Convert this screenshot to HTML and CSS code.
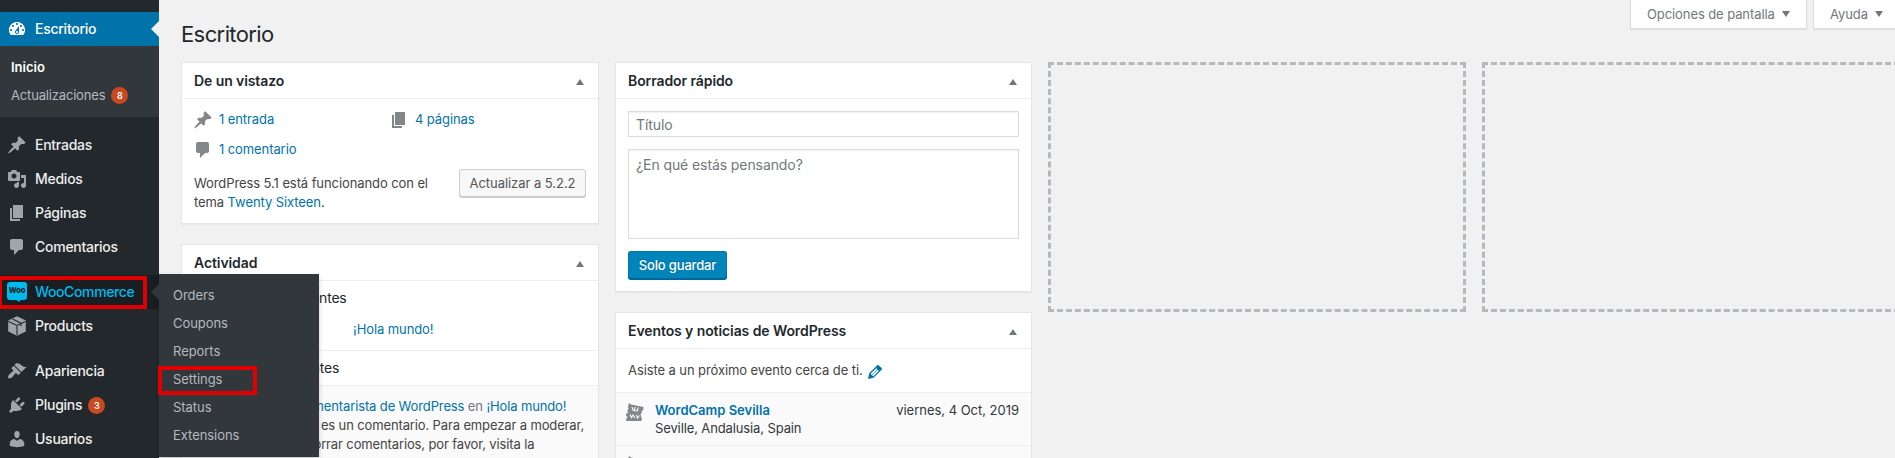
FILE: index.html
```
<!DOCTYPE html>
<html lang="es">
<head>
<meta charset="utf-8">
<title>Escritorio</title>
<link rel="stylesheet" href="styles.css">
</head>
<body>
<svg class="sprite" aria-hidden="true">
  <symbol id="i-dash" viewBox="0 0 20 20"><path fill-rule="evenodd" d="M3.76 16h12.48A7.998 7.998 0 0 0 10 3a7.998 7.998 0 0 0-6.24 13zM10 4c.55 0 1 .45 1 1s-.45 1-1 1-1-.45-1-1 .45-1 1-1zM6 6c.55 0 1 .45 1 1s-.45 1-1 1-1-.45-1-1 .45-1 1-1zm8 0c.55 0 1 .45 1 1s-.45 1-1 1-1-.45-1-1 .45-1 1-1zm-5.37 5.55L12 7v6c0 1.1-.9 2-2 2s-2-.9-2-2c0-.57.24-1.080.63-1.450zM4 10c.55 0 1 .45 1 1s-.45 1-1 1-1-.45-1-1 .45-1 1-1zm12 0c.55 0 1 .45 1 1s-.45 1-1 1-1-.45-1-1 .45-1 1-1zm-5 3c0-.55-.45-1-1-1s-1 .45-1 1 .45 1 1 1 1-.45 1-1z"/></symbol>
  <symbol id="i-pin" viewBox="0 0 20 20"><path d="M10.44 3.02l1.82-1.82 6.36 6.35-1.83 1.82c-1.050-.68-2.480-.57-3.410.36l-.75.75c-.920.93-1.040 2.350-.35 3.410l-1.830 1.820-2.410-2.410-2.800 2.790c-.42.42-3.380 2.710-3.800 2.290s1.860-3.390 2.280-3.810l2.790-2.790L4.100 9.360l1.830-1.820c1.050.69 2.480.57 3.400-.36l.75-.75c.93-.92 1.050-2.350.36-3.410z"/></symbol>
  <symbol id="i-media" viewBox="0 0 20 20"><path fill-rule="evenodd" d="M13 11V4c0-.55-.45-1-1-1h-1.670L9 1H5L3.670 3H2c-.55 0-1 .45-1 1v7c0 .55.45 1 1 1h10c.55 0 1-.45 1-1zM7 4.500c1.380 0 2.500 1.120 2.500 2.500S8.380 9.500 7 9.500 4.500 8.380 4.500 7 5.620 4.500 7 4.500zM14 6h5v10.500c0 1.380-1.120 2.500-2.500 2.500S14 17.880 14 16.500s1.120-2.500 2.500-2.500c.17 0 .34.020.5.050V9h-3V6zm-4 8.050V13h2v3.500c0 1.380-1.120 2.500-2.500 2.500S7 17.880 7 16.500 8.120 14 9.500 14c.17 0 .34.020.5.050z"/></symbol>
  <symbol id="i-page" viewBox="0 0 20 20"><path d="M6 15V2h10v13H6zm-1 1h8v2H3V5h2v11z"/></symbol>
  <symbol id="i-comment" viewBox="0 0 20 20"><path d="M5 2h9c1.100 0 2 .9 2 2v7c0 1.100-.9 2-2 2h-2l-5 5v-5H5c-1.100 0-2-.9-2-2V4c0-1.100.9-2 2-2z"/></symbol>
  <symbol id="i-box" viewBox="0 0 20 20"><path d="M10 .3l8.800 4.300v10.800L10 19.700l-8.800-4.300V4.600z"/><path class="cut" d="M1.500 5.400l8.500 4.100 8.500-4.100M10 9.500V19M5.500 3l8.500 4.200v3"/></symbol>
  <symbol id="i-brush" viewBox="0 0 20 20"><path d="M14.480 11.060L7.410 3.990l1.500-1.500c.5-.56 2.300-.47 3.510.32 1.210.8 1.430 1.280 2.910 2.100 1.180.64 2.450 1.260 4.450.85zm-.71.710L6.700 4.700 4.930 6.470c-.39.39-.39 1.020 0 1.410l1.060 1.060c.39.39.39 1.030 0 1.420-.6.6-1.430 1.110-2.210 1.690-.35.26-.7.53-1.010.84C1.430 14.230.4 16.080 1.400 17.070c.99 1 2.840-.030 4.180-1.360.31-.31.58-.66.850-1.020.57-.78 1.080-1.610 1.690-2.210.39-.39 1.020-.39 1.410 0l1.060 1.060c.39.39 1.020.39 1.410 0z"/></symbol>
  <symbol id="i-plug" viewBox="0 0 20 20"><path d="M13.110 4.360L9.870 7.600 8 5.730l3.240-3.240c.35-.34 1.050-.2 1.560.32.52.51.66 1.210.31 1.550zm-8 1.770l.91-1.120 9.010 9.010-1.190.84c-.71.71-2.630 1.160-3.820 1.160H6.140L4.900 17.260c-.59.59-1.540.59-2.120 0-.59-.58-.59-1.530 0-2.120L4 13.900v-3.880c0-1.130.4-3.190 1.110-3.890zm7.260 3.970l3.240-3.240c.34-.35 1.040-.21 1.550.31.520.51.660 1.210.31 1.550l-3.240 3.250z"/></symbol>
  <symbol id="i-user" viewBox="0 0 20 20"><path d="M10 9.250c-2.270 0-2.730-3.440-2.730-3.440C7 4.020 7.820 2 9.970 2c2.160 0 2.980 2.020 2.710 3.810 0 0-.41 3.440-2.680 3.440zm0 2.570L12.720 10c2.390 0 4.520 2.330 4.520 4.530v2.490s-3.650 1.130-7.240 1.130c-3.650 0-7.240-1.130-7.240-1.130v-2.490c0-2.250 1.940-4.480 4.470-4.480z"/></symbol>
  <symbol id="i-edit" viewBox="0 0 20 20"><path fill-rule="evenodd" d="M13.890 3.390l2.710 2.720c.46.46.42 1.240.030 1.640l-8.010 8.020-5.560 1.160 1.160-5.580s7.600-7.630 7.990-8.030c.39-.39 1.220-.39 1.680.07zm-2.730 2.790l-5.590 5.610 1.110 1.110 5.540-5.650zm-2.970 8.230l5.580-5.600-1.070-1.080-5.590 5.600z"/></symbol>
  <symbol id="i-ticket" viewBox="0 0 20 20"><path d="M4 1l2 1.500L18.500 5 18 8.500l-1.500.5.500 2-1.500 1 .5 2 1 3.500-1 1.500H1l.5-3L3 15l-2-1 .5-3 2-.5L2 8.500l1.500-1L3 5z"/><path class="cut" d="M7 5l1.500 4M10 5l-.5 3.500 3 .5M13 5.500l-.5 3.500M5 12.500l1.500 3 1.500-2.500 2 3M11.500 13l1 3 2-2.500"/></symbol>
</svg>

<div class="page">
  <nav class="menu">
    <a class="item current"><svg class="ic"><use href="#i-dash"/></svg><span>Escritorio</span></a>
    <div class="submenu">
      <a class="on">Inicio</a>
      <a><span>Actualizaciones</span><b class="count">8</b></a>
    </div>
    <a class="item"><svg class="ic"><use href="#i-pin"/></svg><span>Entradas</span></a>
    <a class="item"><svg class="ic"><use href="#i-media"/></svg><span>Medios</span></a>
    <a class="item"><svg class="ic"><use href="#i-page"/></svg><span>Páginas</span></a>
    <a class="item"><svg class="ic"><use href="#i-comment"/></svg><span>Comentarios</span></a>
    <div class="item woo gap"><i class="woo-ic">Woo</i><span>WooCommerce</span>
      <div class="flyout">
        <a>Orders</a><a>Coupons</a><a>Reports</a><a class="settings">Settings</a><a>Status</a><a>Extensions</a>
      </div>
    </div>
    <a class="item"><svg class="ic"><use href="#i-box"/></svg><span>Products</span></a>
    <a class="item gap"><svg class="ic"><use href="#i-brush"/></svg><span>Apariencia</span></a>
    <a class="item"><svg class="ic"><use href="#i-plug"/></svg><span>Plugins</span><b class="count">3</b></a>
    <a class="item"><svg class="ic"><use href="#i-user"/></svg><span>Usuarios</span></a>
  </nav>

  <main class="content">
    <header class="top">
      <h1>Escritorio</h1>
      <div class="tabs">
        <a class="tab options"><span>Opciones de pantalla</span><i class="down"></i></a>
        <a class="tab help"><span>Ayuda</span><i class="down"></i></a>
      </div>
    </header>

    <div class="columns">
      <div class="col">
        <section class="panel glance">
          <h2><span>De un vistazo</span><i class="up"></i></h2>
          <div class="stats">
            <a><svg class="ic"><use href="#i-pin"/></svg><span class="link">1 entrada</span></a>
            <a><svg class="ic"><use href="#i-page"/></svg><span class="link">4 páginas</span></a>
            <a><svg class="ic"><use href="#i-comment"/></svg><span class="link">1 comentario</span></a>
          </div>
          <div class="version">
            <p>WordPress 5.1 está funcionando con el<br>tema <span class="link">Twenty Sixteen</span>.</p>
            <button class="update">Actualizar a 5.2.2</button>
          </div>
        </section>
        <section class="panel activity">
          <h2><span>Actividad</span><i class="up"></i></h2>
          <div class="posts">
            <h3>Publicaciones recientes</h3>
            <p class="link">¡Hola mundo!</p>
          </div>
          <h3 class="recent">Comentarios recientes</h3>
          <div class="comment">
            <p class="author"><span class="link">Un comentarista de WordPress</span> <span class="grey">en</span> <span class="link">¡Hola mundo!</span></p>
            <p>Hola, esto es un comentario. Para empezar a moderar,</p>
            <p>editar y borrar comentarios, por favor, visita la</p>
          </div>
        </section>
      </div>

      <div class="col">
        <section class="panel draft">
          <h2><span>Borrador rápido</span><i class="up"></i></h2>
          <div class="form">
            <div class="field title"><span>Título</span></div>
            <div class="field body"><span>¿En qué estás pensando?</span></div>
            <button class="save">Solo guardar</button>
          </div>
        </section>
        <section class="panel events">
          <h2><span>Eventos y noticias de WordPress</span><i class="up"></i></h2>
          <div class="near"><span>Asiste a un próximo evento cerca de ti.</span><svg class="ic"><use href="#i-edit"/></svg></div>
          <div class="event">
            <svg class="ic"><use href="#i-ticket"/></svg>
            <p><b class="link">WordCamp Sevilla</b><br>Seville, Andalusia, Spain</p>
            <time>viernes, 4 Oct, 2019</time>
          </div>
          <div class="event">
            <svg class="ic"><use href="#i-ticket"/></svg>
          </div>
        </section>
      </div>

      <div class="drop"></div>
      <div class="drop"></div>
    </div>
  </main>
</div>
</body>
</html>
```
FILE: styles.css
```
*, *::before, *::after { box-sizing: border-box; margin: 0; padding: 0; }
html, body { height: 100%; overflow: hidden; }
body { font: 13px/19px Inter, "Liberation Sans", sans-serif; letter-spacing: -0.09px; color: #444; background: #f1f1f1; }
p, h1, h2, h3, a, span, time { white-space: nowrap; }
.sprite { position: absolute; width: 0; height: 0; }
.cut { fill: none; stroke: var(--cut, #fafafa); stroke-width: 1.1; }
.ic { width: 20px; height: 20px; fill: currentColor; flex: none; }
.link { color: #0073aa; }
.page { display: flex; height: 458px; overflow: hidden; }

/* Sidebar */
.menu { width: 159px; height: 458px; flex: none; background: #23282d; padding-top: 12px; position: relative; z-index: 2; }
.item { display: flex; align-items: center; height: 34px; padding-left: 7px; color: #eee; font-size: 14px; font-weight: 500; letter-spacing: -0.26px; position: relative; }
.item > span { padding-bottom: 2px; }
.item .ic { color: #a0a5aa; margin-right: 8px; width: 20px; --cut: #23282d; }
.item.gap { margin-top: 11px; }
.item.current { background: #0073aa; color: #fff; }
.item.current .ic { color: #fff; }
.item.current::after { content: ""; position: absolute; right: 0; top: 9px; border: 8px solid transparent; border-left: 0; border-right-color: #f1f1f1; }
.submenu { background: #32373c; height: 71px; padding-top: 7px; margin-bottom: 11px; }
.submenu a { display: flex; align-items: center; height: 28px; padding-left: 11px; color: #b4b9be; letter-spacing: -0.17px; }
.submenu .on { color: #fff; font-weight: 600; letter-spacing: 0; }
.count { width: 17px; height: 17px; border-radius: 50%; background: #ca4a1f; color: #fff; font-size: 9px; line-height: 17px; font-weight: 600; letter-spacing: 0; text-align: center; margin-left: 6px; }
.woo { background: #191e23; color: #00b9eb; letter-spacing: -0.38px; }
.woo::before { content: ""; position: absolute; left: -2px; top: 1px; width: 149px; height: 33px; border: 4px solid #e00000; z-index: 2; }
.woo::after { content: ""; position: absolute; right: 0; top: 9px; border: 8px solid transparent; border-left: 0; border-right-color: #32373c; }
.woo-ic { width: 20px; height: 18px; background: #00b9eb; border-radius: 3px; color: #191e23; font: 800 7.500px/17px Inter, sans-serif; letter-spacing: -0.2px; text-align: center; margin: 0 8px 3px 0; position: relative; }
.woo-ic::after { content: ""; position: absolute; left: 9px; top: 18px; border-top: 2px solid #00b9eb; border-left: 4px solid transparent; }
.flyout { position: absolute; left: 159px; top: -1px; width: 160px; height: 183px; background: #32373c; padding-top: 8px; box-shadow: 0 3px 5px rgba(0,0,0,.2); }
.flyout a { display: flex; align-items: center; height: 28px; padding: 0 0 1px 14px; color: #b4b9be; font-size: 13px; font-weight: 400; letter-spacing: -0.05px; position: relative; }
.settings::before { content: ""; position: absolute; left: -1px; top: 0; width: 99px; height: 29px; border: 4px solid #e00000; }

/* Content */
.content { width: 1736px; flex: none; }
.top { height: 62px; display: flex; justify-content: space-between; padding-left: 22px; }
h1 { font-size: 22px; line-height: 29px; font-weight: 400; letter-spacing: -0.6px; color: #23282d; padding-top: 20px; }
.tabs { display: flex; gap: 6px; }
.tab { height: 29px; background: #fff; border: 1px solid #ddd; border-top: 0; box-shadow: 0 1px 1px rgba(0,0,0,.06); display: flex; align-items: center; padding: 0 0 0 16px; color: #72777c; }
.options { width: 177px; }
.help { width: 82px; border-right: 0; }
.down { border: 4px solid transparent; border-top: 6px solid #72777c; border-bottom: 0; margin: 0 0 1px 7px; }
.up { border: 4px solid transparent; border-bottom: 6px solid #72777c; border-top: 0; margin: 2px 14px 0 0; }
.columns { display: grid; grid-template-columns: 418px 417px 418px 418px; column-gap: 16px; padding-left: 22px; align-items: start; }
.col { display: flex; flex-direction: column; gap: 20px; }
.panel { background: #fff; border: 1px solid #e5e5e5; box-shadow: 0 1px 1px rgba(0,0,0,.04); }
.panel h2 { height: 36px; border-bottom: 1px solid #eee; display: flex; align-items: center; justify-content: space-between; padding-left: 12px; font-size: 14px; font-weight: 600; color: #23282d; }
h3 { font-size: 14px; font-weight: 400; letter-spacing: -0.2px; color: #23282d; padding-left: 12px; }
.glance { height: 162px; }
.stats { display: grid; grid-template-columns: 196px 1fr; row-gap: 10px; padding: 11px 12px 0 11px; }
.stats a { display: flex; align-items: center; height: 20px; gap: 6px; }
.stats span { padding-bottom: 1px; }
.stats .ic { color: #82878c; }
.version { display: flex; justify-content: space-between; padding: 9px 12px 0; }
.version p { padding-top: 5px; }
button { font: 13px Inter, sans-serif; letter-spacing: -0.05px; display: flex; align-items: center; justify-content: center; border-radius: 3px; white-space: nowrap; }
.update { width: 127px; height: 28px; color: #555; background: #f7f7f7; border: 1px solid #ccc; box-shadow: 0 1px 0 #ccc; }
.activity { height: 260px; }
.posts { height: 70px; border-bottom: 1px solid #eee; padding-top: 7px; }
.posts p { padding: 13px 0 0 171px; }
.recent { height: 35px; line-height: 34px; border-bottom: 1px solid #eee; }
.comment { background: #fafafa; height: 118px; padding: 11px 0 0 75px; letter-spacing: -0.13px; }
.author { padding-left: 20px; }
.grey { color: #72777c; }
.draft { height: 230px; }
.form { padding: 12px; }
.field { border: 1px solid #ddd; box-shadow: inset 0 1px 2px rgba(0,0,0,.07); font-size: 14px; color: #72777c; padding-left: 7px; }
.title { height: 26px; line-height: 26px; margin-bottom: 12px; }
.body { height: 90px; padding-top: 5px; margin-bottom: 12px; }
.save { width: 99px; height: 28px; background: #0085ba; border: 1px solid #0073aa; border-bottom-color: #006799; box-shadow: 0 1px 0 #006799; color: #fff; font-weight: 500; letter-spacing: -0.16px; text-shadow: 0 -1px 1px #006799; }
.events { height: 200px; }
.near { height: 43px; display: flex; align-items: center; padding-left: 12px; }
.near .ic { color: #0073aa; margin: 3px 0 0 2px; }
.event { height: 53px; background: #fafafa; border-top: 1px solid #eee; display: flex; align-items: flex-start; padding: 8px 12px 0 9px; color: #32373c; line-height: 18px; letter-spacing: -0.12px; }
.event .ic { color: #82878c; margin: 1px 10px 0 0; }
.event time { margin-left: auto; letter-spacing: -0.02px; }
.event b { font-weight: 600; letter-spacing: 0; }
.drop { height: 250px; border: 3px dashed #b4b9be; }
```
